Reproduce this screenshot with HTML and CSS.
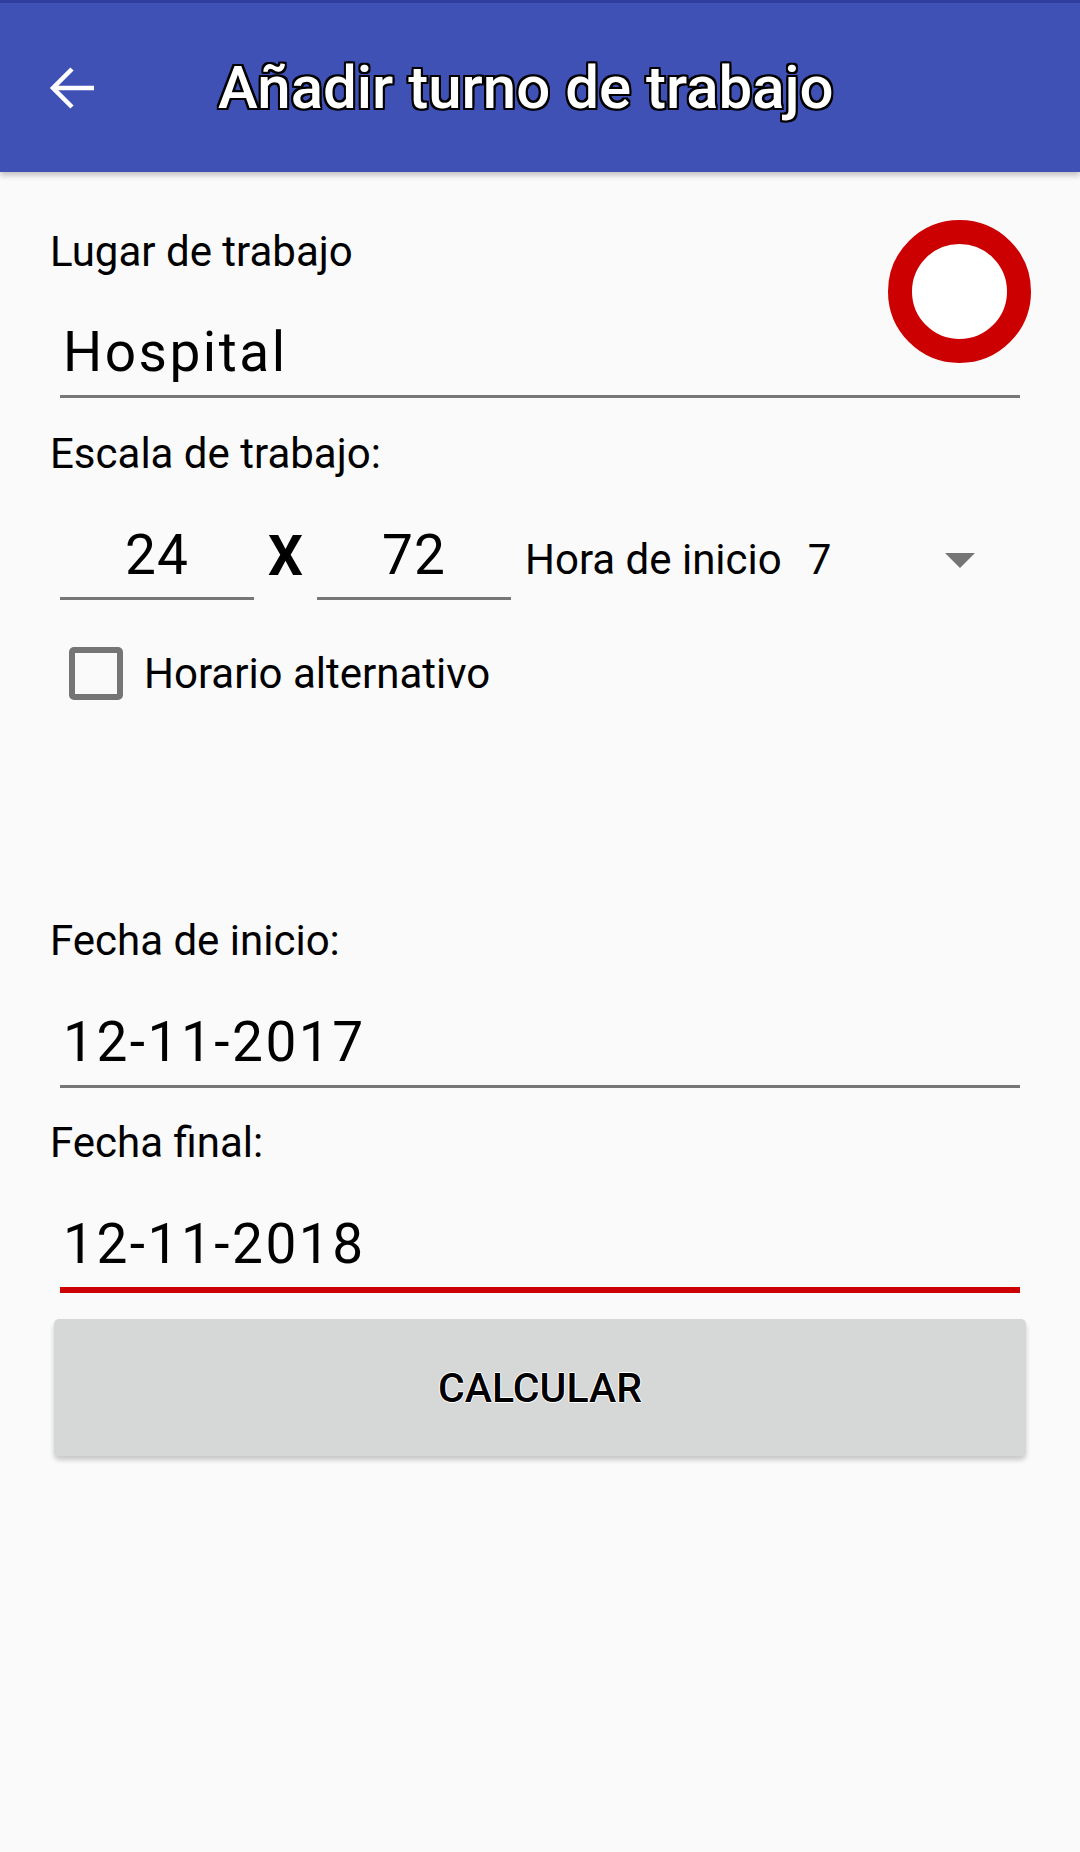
FILE: index.html
```html
<!DOCTYPE html>
<html lang="es">

<head>
    <meta charset="UTF-8">
    <meta name="viewport" content="width=device-width, initial-scale=1.0">
    <title>Añadir turno de trabajo</title>
    <link rel="stylesheet" href="styles.css">
</head>

<body>
    <header class="app-bar">
        <button class="back-btn" aria-label="Volver">
            <svg width="48" height="48" viewBox="0 0 48 48">
                <path d="M46 24H5M24 5L5 24l19 19" fill="none" stroke="#fff" stroke-width="4.5"/>
            </svg>
        </button>
        <h1 class="title">Añadir turno de trabajo</h1>
    </header>

    <main class="form">
        <section class="place">
            <label class="label place-label">Lugar de trabajo</label>
            <div class="field place-field">Hospital</div>
            <div class="color-dot"></div>
        </section>

        <label class="label scale-label">Escala de trabajo:</label>
        <div class="scale-row">
            <div class="field num-field">24</div>
            <span class="times">X</span>
            <div class="field num-field">72</div>
            <span class="start-label">Hora de inicio</span>
            <div class="spinner">
                <span>7</span>
                <svg class="spinner-arrow" width="30" height="15" viewBox="0 0 30 15">
                    <path d="M0 0h30L15 15z" fill="#757575"/>
                </svg>
            </div>
        </div>

        <div class="check-row">
            <span class="checkbox"></span>
            <span class="check-text">Horario alternativo</span>
        </div>

        <label class="label date-start-label">Fecha de inicio:</label>
        <div class="field date-field">12-11-2017</div>

        <label class="label date-end-label">Fecha final:</label>
        <div class="field date-field active">12-11-2018</div>

        <button class="calc-btn">CALCULAR</button>
    </main>
</body>

</html>
```

FILE: styles.css
```css
body {
    margin: 0;
    background-color: #fafafa;
    font-family: Roboto, 'Noto Sans', sans-serif;
    color: #000;
    height: 1852px;
}

.app-bar {
    height: 169px;
    border-top: 3px solid #303f9f;
    background-color: #3f51b5;
    display: flex;
    align-items: center;
    box-shadow: 0 3px 6px rgba(0, 0, 0, 0.25);
    position: relative;
}

.back-btn {
    background: none;
    border: none;
    padding: 0;
    margin-left: 48px;
    width: 48px;
    height: 48px;
    display: flex;
}

.title {
    margin: 0 0 0 122px;
    font-size: 60px;
    font-weight: 500;
    color: #fff;
    line-height: 72px;
    text-shadow:
        2px 0 0 #000, -2px 0 0 #000, 0 2px 0 #000, 0 -2px 0 #000,
        2px 2px 0 #000, -2px 2px 0 #000, 2px -2px 0 #000, -2px -2px 0 #000;
}

.form {
    padding: 0 49px 0 50px;
}

.label {
    display: block;
    font-size: 42px;
    line-height: 50px;
}

.field {
    font-size: 55px;
    line-height: 66px;
    letter-spacing: 2.5px;
    padding: 0 0 10px 3px;
    border-bottom: 3px solid #777;
}

/* lugar de trabajo */
.place {
    display: grid;
    grid-template-columns: 1fr 143px;
    margin-top: 55px;
}

.place-label {
    grid-row: 1;
    grid-column: 1;
}

.place-field {
    grid-row: 2;
    grid-column: 1 / -1;
    margin: 42px 11px 0 10px;
}

.color-dot {
    grid-row: 1 / 3;
    grid-column: 2;
    align-self: start;
    margin-top: -7px;
    width: 95px;
    height: 95px;
    border: 24px solid #cc0000;
    border-radius: 50%;
    background-color: #fff;
    z-index: 1;
}

/* escala */
.scale-label {
    margin-top: 31px;
}

.scale-row {
    display: flex;
    align-items: flex-start;
    margin-top: 43px;
    padding-left: 10px;
}

.num-field {
    width: 194px;
    padding: 0 0 9px 0;
    text-align: center;
    letter-spacing: 1px;
}

.times {
    width: 63px;
    text-align: center;
    font-size: 55px;
    font-weight: 700;
    line-height: 66px;
    margin-top: 1px;
}

.start-label {
    font-size: 42px;
    line-height: 50px;
    margin: 13px 0 0 14px;
}

.spinner {
    flex: 1;
    display: flex;
    align-items: center;
    justify-content: space-between;
    font-size: 42px;
    line-height: 50px;
    margin: 13px 56px 0 26px;
}

.spinner-arrow {
    display: block;
}

/* checkbox */
.check-row {
    display: flex;
    align-items: center;
    margin-top: 47px;
    padding-left: 19px;
}

.checkbox {
    width: 42px;
    height: 41px;
    border: 6px solid #757575;
    border-radius: 5px;
}

.check-text {
    font-size: 42px;
    line-height: 50px;
    margin-left: 21px;
}

/* fechas */
.date-start-label {
    margin-top: 216px;
}

.date-field {
    margin: 43px 11px 0 10px;
}

.date-end-label {
    margin-top: 30px;
}

.date-field.active {
    border-bottom: 6px solid #cc0000;
}

.calc-btn {
    display: block;
    width: 972px;
    height: 137px;
    margin: 26px 0 0 4px;
    border: none;
    border-radius: 5px;
    background-color: #d6d7d7;
    box-shadow: 0 4px 5px rgba(0, 0, 0, 0.2);
    font-family: Roboto, sans-serif;
    font-size: 41px;
    font-weight: 500;
    color: #000;
    text-shadow:
        1px 0 0 #fff, -1px 0 0 #fff, 0 1px 0 #fff, 0 -1px 0 #fff;
}
```
